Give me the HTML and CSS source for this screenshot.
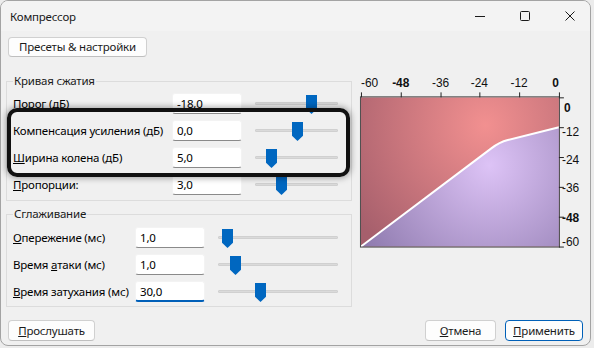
FILE: index.html
```html
<!DOCTYPE html>
<html lang="ru">
<head>
    <meta charset="UTF-8">
    <title>Компрессор</title>
    <link rel="stylesheet" href="styles.css">
</head>
<body>

    <div class="window">
        <div class="titlebar">
            <span class="title">Компрессор</span>
            <div class="caption">
                <svg width="10" height="10" viewBox="0 0 10 10"><path d="M0 5.5h10" stroke="#1a1a1a" stroke-width="1"/></svg>
                <svg width="10" height="10" viewBox="0 0 10 10"><rect x="0.5" y="0.5" width="9" height="9" rx="1" fill="none" stroke="#1a1a1a" stroke-width="1"/></svg>
                <svg width="10" height="10" viewBox="0 0 10 10"><path d="M0.5 0.5l9 9M9.5 0.5l-9 9" stroke="#1a1a1a" stroke-width="1"/></svg>
            </div>
        </div>

        <div class="content">
            <div class="toolbar">
                <button class="btn presets">Пресеты &amp; настройки</button>
            </div>

            <div class="main">
                <div class="controls">
                    <!-- Compression curve -->
                    <fieldset class="group curve">
                        <legend>Кривая сжатия</legend>
                        <div class="row">
                            <label>Порог (дБ)</label>
                            <input class="field" value="-18,0">
                            <div class="slider"><span class="thumb" style="left: 51px"></span></div>
                        </div>
                        <div class="row">
                            <label>Компенсация усиления (дБ)</label>
                            <input class="field" value="0,0">
                            <div class="slider"><span class="thumb" style="left: 37px"></span></div>
                        </div>
                        <div class="row">
                            <label><u>Ш</u>ирина колена (дБ)</label>
                            <input class="field" value="5,0">
                            <div class="slider"><span class="thumb" style="left: 11px"></span></div>
                        </div>
                        <div class="row">
                            <label><u>П</u>ропорции:</label>
                            <input class="field" value="3,0">
                            <div class="slider"><span class="thumb" style="left: 21px"></span></div>
                        </div>
                    </fieldset>

                    <!-- Smoothing -->
                    <fieldset class="group smooth">
                        <legend>Сглаживание</legend>
                        <div class="row">
                            <label><u>О</u>пережение (мс)</label>
                            <input class="field" value="1,0">
                            <div class="slider"><span class="thumb" style="left: 4px"></span></div>
                        </div>
                        <div class="row">
                            <label>Время <u>а</u>таки (мс)</label>
                            <input class="field" value="1,0">
                            <div class="slider"><span class="thumb" style="left: 12px"></span></div>
                        </div>
                        <div class="row">
                            <label><u>В</u>ремя затухания (мс)</label>
                            <input class="field focused" value="30,0">
                            <div class="slider"><span class="thumb" style="left: 37px"></span></div>
                        </div>
                    </fieldset>
                </div>

                <!-- Curve preview -->
                <svg class="graph" width="232" height="180" viewBox="0 0 232 180">
                    <defs>
                        <radialGradient id="redFill" gradientUnits="userSpaceOnUse" cx="132" cy="52" r="160">
                            <stop offset="0" stop-color="#f29090"/>
                            <stop offset="1" stop-color="#a65f6c"/>
                        </radialGradient>
                        <radialGradient id="purpleFill" gradientUnits="userSpaceOnUse" cx="136" cy="92" r="150">
                            <stop offset="0" stop-color="#ddc3f6"/>
                            <stop offset="1" stop-color="#8e7aae"/>
                        </radialGradient>
                    </defs>
                    <rect x="7" y="24" width="199" height="150" fill="url(#redFill)"/>
                    <path d="M7 174L138 75.3Q146.3 69 154.6 66.9L206 54V174Z" fill="url(#purpleFill)"/>
                    <path d="M7 174L138 75.3Q146.3 69 154.6 66.9L206 54" fill="none" stroke="#fff" stroke-width="2"/>
                    <rect x="6.5" y="23.5" width="200" height="151" fill="none" stroke="#4a4a4a"/>

                    <g stroke="#222">
                        <path d="M7.5 19v5M47.5 19v5M87.5 19v5M126.5 19v5M166.5 19v5M206.5 19v5"/>
                        <path d="M206 24.5h5M206 54.5h5M206 84.5h5M206 114.5h5M206 144.5h5M206 174.5h5"/>
                    </g>

                    <g class="axis">
                        <text x="7" y="13.5">-60</text>
                        <text x="47" y="13.5" text-anchor="middle" class="bold">-48</text>
                        <text x="87" y="13.5" text-anchor="middle">-36</text>
                        <text x="126" y="13.5" text-anchor="middle">-24</text>
                        <text x="166" y="13.5" text-anchor="middle">-12</text>
                        <text x="206" y="13.5" text-anchor="end" class="bold">0</text>

                        <text x="211" y="38.5" class="bold">0</text>
                        <text x="209" y="62.5">-12</text>
                        <text x="209" y="91.5">-24</text>
                        <text x="209" y="119.5">-36</text>
                        <text x="209" y="149.5" class="bold">-48</text>
                        <text x="209" y="173.5">-60</text>
                    </g>
                </svg>
            </div>

            <div class="footer">
                <button class="btn preview"><u>П</u>рослушать</button>
                <button class="btn cancel"><u>О</u>тмена</button>
                <button class="btn apply"><u>П</u>рименить</button>
            </div>
        </div>

        <!-- Highlight annotation -->
        <div class="highlight"></div>
    </div>

</body>
</html>
```

FILE: styles.css
```css
body {
    margin: 0;
    background-color: #ececec;
    font-family: "Noto Sans", "Open Sans", sans-serif;
    font-size: 11.5px;
    letter-spacing: -0.2px;
    color: #000;
}

.window {
    position: relative;
    box-sizing: border-box;
    width: 591px;
    height: 346px;
    background-color: #f0f0f0;
    border: 1px solid #a3a3a3;
    border-radius: 8px;
    overflow: hidden;
}

.titlebar {
    display: flex;
    align-items: center;
    justify-content: space-between;
    height: 30px;
    background-color: #f3f3f3;
    padding: 0 15px 0 9px;
}

.title {
    color: #1a1a1a;
}

.caption {
    display: flex;
    align-items: center;
    gap: 35px;
}

.caption svg {
    display: block;
}

.content {
    padding: 0 5px;
}

.toolbar {
    padding: 6px 2px 0;
    margin-bottom: 16px;
}

.btn {
    font-family: inherit;
    font-size: inherit;
    letter-spacing: inherit;
    color: #1b1b1b;
    background-color: #fdfdfd;
    border: 1px solid #d0d0d0;
    border-bottom-color: #bfbfbf;
    border-radius: 4px;
    height: 20px;
    padding: 0;
    line-height: 16px;
    white-space: nowrap;
    display: block;
}

.presets {
    width: 139px;
}

.main {
    display: flex;
    align-items: flex-start;
}

.controls {
    width: 348px;
    display: flex;
    flex-direction: column;
    gap: 5px;
}

.group {
    margin: 0;
    border: 1px solid #dcdcdc;
    padding: 4px 13px 5px 6px;
    display: flex;
    flex-direction: column;
    gap: 6px;
}

.group legend {
    padding: 0 1px;
    line-height: 16px;
    color: #1a1a1a;
}

.smooth {
    padding-top: 5px;
    padding-bottom: 4px;
}

.row {
    display: grid;
    align-items: center;
    height: 21px;
}

.curve .row {
    grid-template-columns: 159px 70px 1fr;
}

.smooth .row {
    grid-template-columns: 122px 70px 1fr;
}

.row label {
    white-space: nowrap;
}

.field {
    box-sizing: border-box;
    width: 70px;
    height: 21px;
    font-family: inherit;
    font-size: inherit;
    letter-spacing: inherit;
    color: #000;
    background-color: #fff;
    border: 1px solid #f3f3f3;
    border-bottom: 1px solid #8a8a8a;
    border-radius: 3px;
    padding: 0 4px;
    outline: none;
}

.field.focused {
    border-bottom: 2px solid #005fb8;
}

.slider {
    position: relative;
    height: 21px;
    margin-left: 13px;
}

.slider::before {
    content: "";
    position: absolute;
    left: 0;
    right: 0;
    top: 9px;
    height: 3px;
    background-color: #dadada;
    border: 1px solid #d0d0d0;
    box-sizing: border-box;
    border-radius: 1px;
}

.thumb {
    position: absolute;
    top: 2px;
    width: 11px;
    height: 19px;
    background-color: #0067c0;
    clip-path: polygon(0 0, 100% 0, 100% 72%, 50% 100%, 0 72%);
}

.graph {
    display: block;
    margin-left: 2px;
}

.axis text {
    font-family: "Liberation Sans", Arial, sans-serif;
    font-size: 12px;
    letter-spacing: 0;
    fill: #111;
}

.axis .bold {
    font-weight: bold;
}

.footer {
    display: flex;
    gap: 9px;
    margin-top: 13px;
    padding: 0 2px;
}

.footer .btn {
    height: 21px;
}

.preview {
    width: 87px;
    margin-right: auto;
}

.cancel {
    width: 71px;
}

.apply {
    width: 78px;
    border-color: #0060b8;
}

.highlight {
    position: absolute;
    left: 6px;
    top: 107px;
    width: 343px;
    height: 69px;
    box-sizing: border-box;
    border: 4px solid #111;
    border-radius: 10px;
    box-shadow: 0 0 6px 1px rgba(0, 0, 0, 0.35);
}
```
